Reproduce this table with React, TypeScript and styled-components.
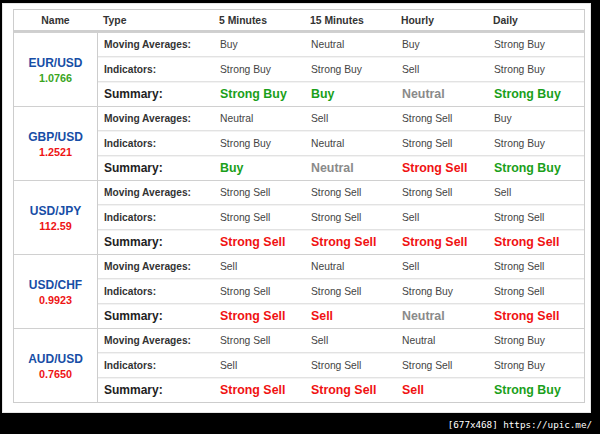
import React from 'react';
import styled, { createGlobalStyle } from 'styled-components';

type Signal = 'Strong Buy' | 'Buy' | 'Neutral' | 'Sell' | 'Strong Sell';

interface Pair {
  name: string;
  price: string;
  up: boolean;
  ma: Signal[];
  ind: Signal[];
  sum: Signal[];
}

const pairs: Pair[] = [
  {
    name: 'EUR/USD',
    price: '1.0766',
    up: true,
    ma: ['Buy', 'Neutral', 'Buy', 'Strong Buy'],
    ind: ['Strong Buy', 'Strong Buy', 'Sell', 'Strong Buy'],
    sum: ['Strong Buy', 'Buy', 'Neutral', 'Strong Buy'],
  },
  {
    name: 'GBP/USD',
    price: '1.2521',
    up: false,
    ma: ['Neutral', 'Sell', 'Strong Sell', 'Buy'],
    ind: ['Strong Buy', 'Neutral', 'Strong Sell', 'Strong Buy'],
    sum: ['Buy', 'Neutral', 'Strong Sell', 'Strong Buy'],
  },
  {
    name: 'USD/JPY',
    price: '112.59',
    up: false,
    ma: ['Strong Sell', 'Strong Sell', 'Strong Sell', 'Sell'],
    ind: ['Strong Sell', 'Strong Sell', 'Sell', 'Strong Sell'],
    sum: ['Strong Sell', 'Strong Sell', 'Strong Sell', 'Strong Sell'],
  },
  {
    name: 'USD/CHF',
    price: '0.9923',
    up: false,
    ma: ['Sell', 'Neutral', 'Sell', 'Strong Sell'],
    ind: ['Strong Sell', 'Strong Sell', 'Strong Buy', 'Strong Sell'],
    sum: ['Strong Sell', 'Sell', 'Neutral', 'Strong Sell'],
  },
  {
    name: 'AUD/USD',
    price: '0.7650',
    up: false,
    ma: ['Strong Sell', 'Sell', 'Neutral', 'Strong Buy'],
    ind: ['Sell', 'Strong Sell', 'Strong Sell', 'Strong Buy'],
    sum: ['Strong Sell', 'Strong Sell', 'Sell', 'Strong Buy'],
  },
];

const signalColor = (s: Signal) => {
  if (s === 'Strong Buy' || s === 'Buy') return '#1aa01a';
  if (s === 'Neutral') return '#8a8a8a';
  return '#f01212';
};

const GlobalStyle = createGlobalStyle`
  html, body {
    margin: 0;
    padding: 0;
    background: #000;
  }
  body {
    font-family: "Liberation Sans", Arial, sans-serif;
  }
`;

const Screen = styled.div`
  width: 600px;
  height: 434px;
  background: #000;
  padding: 3px 0 0 2px;
  box-sizing: border-box;
  display: flex;
  flex-direction: column;
`;

const Panel = styled.div`
  width: 589px;
  height: 410px;
  box-sizing: border-box;
  background: #fff;
  border: 1px solid #e6e6e6;
  padding: 5px 5px 0 10px;
`;

const Table = styled.div`
  width: 572px;
  border: 1px solid #cdcdcd;
  box-sizing: border-box;
`;

const cols = '83px 116px 91px 91px 92px 1fr';
const valueCols = '116px 91px 91px 92px 1fr';

const HeaderRow = styled.div`
  display: grid;
  grid-template-columns: ${cols};
  height: 20px;
  border-bottom: 2px solid #cfcfcf;
  box-sizing: content-box;
  align-items: center;
`;

const HeadCell = styled.div<{ $center?: boolean }>`
  font-size: 10.4px;
  font-weight: bold;
  color: #333;
  padding-left: ${p => (p.$center ? '0' : '6px')};
  text-align: ${p => (p.$center ? 'center' : 'left')};
`;

const Group = styled.div`
  display: flex;
  height: 74px;
  box-sizing: border-box;
  border-top: 1px solid #d0d0d0;

  &:first-of-type {
    border-top: none;
    height: 73px;
  }
`;

const NameCell = styled.div`
  width: 83px;
  flex-shrink: 0;
  border-right: 1px solid #cdcdcd;
  display: flex;
  flex-direction: column;
  align-items: center;
  justify-content: center;
  padding-top: 2px;
`;

const PairName = styled.div`
  font-size: 12px;
  font-weight: bold;
  color: #174ea6;
  line-height: 15px;
`;

const Price = styled.div<{ $up: boolean }>`
  font-size: 10.8px;
  font-weight: bold;
  line-height: 15px;
  color: ${p => (p.$up ? '#3aa51e' : '#ee1414')};
`;

const Rows = styled.div`
  flex: 1;
  display: flex;
  flex-direction: column;
`;

const Row = styled.div<{ $last?: boolean }>`
  flex: ${p => (p.$last ? '25' : '24')};
  display: grid;
  grid-template-columns: ${valueCols};
  align-items: center;
  border-bottom: ${p => (p.$last ? 'none' : '1px solid #e2e2e2')};
  box-shadow: ${p => (p.$last ? 'none' : '0 1px 0 #f3f3f3')};
`;

const Label = styled.div<{ $summary?: boolean }>`
  padding-left: 6px;
  font-weight: bold;
  font-size: ${p => (p.$summary ? '12px' : '10.2px')};
  color: ${p => (p.$summary ? '#222' : '#333')};
`;

const Value = styled.div`
  padding-left: 6px;
  font-size: 10.3px;
  color: #444;
`;

const SummaryValue = styled.div<{ $color: string }>`
  padding-left: 6px;
  font-size: 12.4px;
  font-weight: bold;
  color: ${p => p.$color};
`;

const Footer = styled.div`
  width: 590px;
  display: flex;
  justify-content: flex-end;
  padding-top: 6px;
`;

const Watermark = styled.span`
  font-family: "DejaVu Sans Mono", monospace;
  font-size: 9.3px;
  color: #fff;
  letter-spacing: -0.05px;
`;

const App: React.FC = () => {
  return (
    <Screen>
      <GlobalStyle />
      <Panel>
        <Table>
          <HeaderRow>
            <HeadCell $center>Name</HeadCell>
            <HeadCell>Type</HeadCell>
            <HeadCell>5 Minutes</HeadCell>
            <HeadCell>15 Minutes</HeadCell>
            <HeadCell>Hourly</HeadCell>
            <HeadCell>Daily</HeadCell>
          </HeaderRow>
          {pairs.map(p => (
            <Group key={p.name}>
              <NameCell>
                <PairName>{p.name}</PairName>
                <Price $up={p.up}>{p.price}</Price>
              </NameCell>
              <Rows>
                <Row>
                  <Label>Moving Averages:</Label>
                  {p.ma.map((s, i) => (
                    <Value key={i}>{s}</Value>
                  ))}
                </Row>
                <Row>
                  <Label>Indicators:</Label>
                  {p.ind.map((s, i) => (
                    <Value key={i}>{s}</Value>
                  ))}
                </Row>
                <Row $last>
                  <Label $summary>Summary:</Label>
                  {p.sum.map((s, i) => (
                    <SummaryValue key={i} $color={signalColor(s)}>
                      {s}
                    </SummaryValue>
                  ))}
                </Row>
              </Rows>
            </Group>
          ))}
        </Table>
      </Panel>
      <Footer>
        <Watermark>[677x468] https://upic.me/</Watermark>
      </Footer>
    </Screen>
  );
};

export default App;
